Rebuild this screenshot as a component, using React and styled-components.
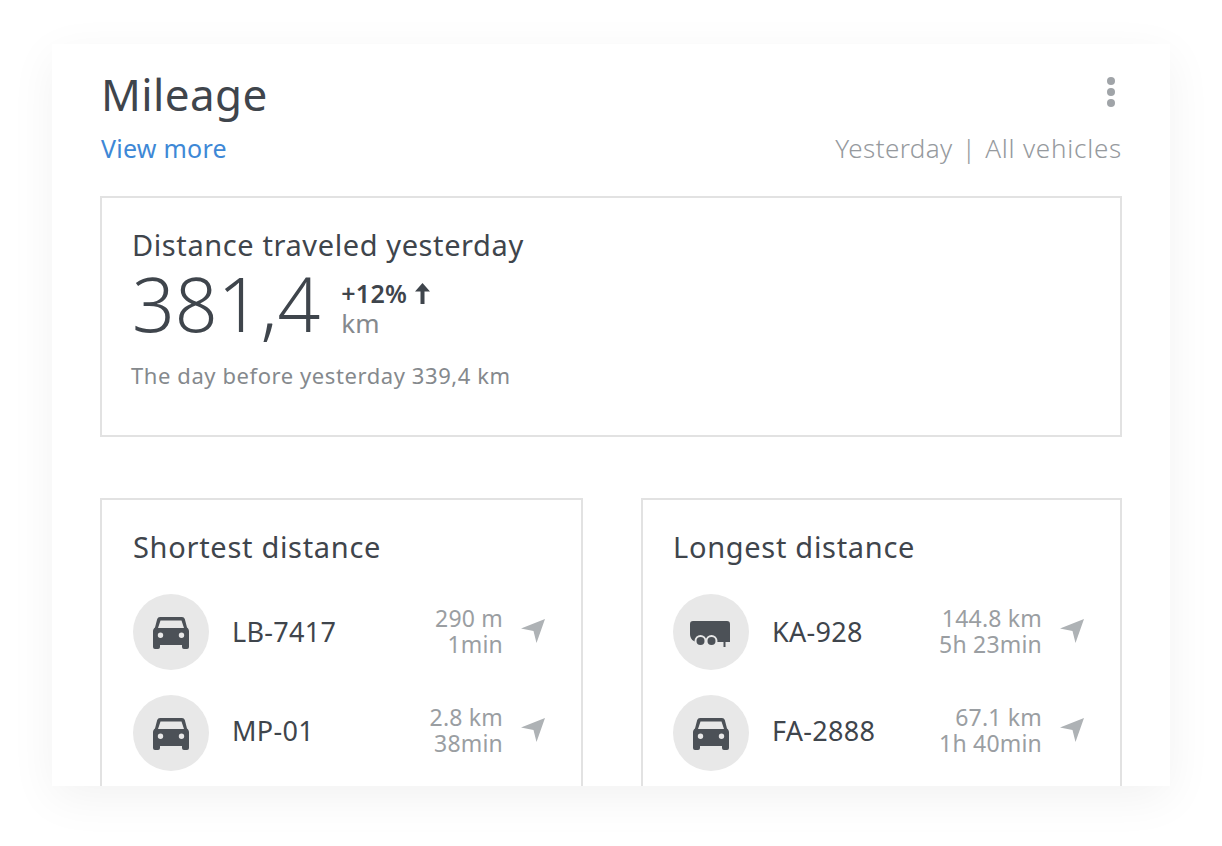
import styled, { createGlobalStyle } from 'styled-components'

const GlobalStyle = createGlobalStyle`
  html, body {
    margin: 0;
    background: #fff;
  }
  body {
    font-family: "Noto Sans", "Open Sans", sans-serif;
    color: #3f454c;
  }
  * {
    box-sizing: border-box;
  }
`

const Page = styled.div`
  width: 1222px;
  height: 846px;
  padding: 44px 52px 0;
  overflow: hidden;
`

const Card = styled.div`
  width: 1118px;
  height: 742px;
  padding: 22px 48px 0 48px;
  background: #fff;
  overflow: hidden;
  box-shadow: 0 12px 44px rgba(0, 0, 0, 0.055);
`

const Header = styled.div`
  display: flex;
  justify-content: space-between;
  align-items: flex-start;
`

const Title = styled.h1`
  margin: 0 0 0 1px;
  font-size: 44px;
  line-height: 56px;
  font-weight: 400;
  letter-spacing: 0.4px;
`

const Dots = styled.div`
  display: flex;
  flex-direction: column;
  gap: 3px;
  margin: 11px 7px 0 0;

  span {
    width: 8px;
    height: 8px;
    border-radius: 50%;
    background: #a0a4a8;
  }
`

const SubHeader = styled.div`
  display: flex;
  justify-content: space-between;
  align-items: center;
  margin-top: 10px;
  height: 32px;
`

const MoreLink = styled.a`
  margin-left: 1px;
  font-size: 25px;
  letter-spacing: 0.25px;
  color: #3e88d6;
`

const Filters = styled.div`
  display: flex;
  gap: 9px;
  font-size: 26px;
  font-weight: 300;
  letter-spacing: 0.4px;
  color: #969a9e;
`

const Vehicles = styled.span`
  letter-spacing: 0.75px;
`

const Summary = styled.div`
  margin-top: 32px;
  height: 241px;
  padding: 29px 30px 0;
  border: 2px solid #e2e2e2;
`

const SummaryTitle = styled.div`
  font-size: 29px;
  line-height: 36px;
  letter-spacing: 0.6px;
`

const ValueRow = styled.div`
  display: flex;
  align-items: center;
  gap: 21px;
  height: 80px;
`

const BigValue = styled.div`
  font-size: 75px;
  line-height: 78px;
  font-weight: 300;
`

const Delta = styled.div`
  display: flex;
  flex-direction: column;
  margin-top: 10px;
`

const Change = styled.div`
  display: flex;
  align-items: center;
  gap: 8px;
  font-size: 25px;
  line-height: 30px;
  font-weight: 600;
  letter-spacing: 0.3px;
`

const Unit = styled.div`
  font-size: 26px;
  line-height: 30px;
  color: #85898d;
`

const Previous = styled.div`
  margin: 17px 0 0 -1px;
  font-size: 22px;
  line-height: 30px;
  letter-spacing: 0.58px;
  color: #85898d;
`

const Panels = styled.div`
  display: grid;
  grid-template-columns: 483px 481px;
  gap: 58px;
  margin-top: 61px;
`

const Panel = styled.div`
  height: 400px;
  padding: 28px 36px 0 ${(props) => props.$inset}px;
  border: 2px solid #e2e2e2;
`

const PanelTitle = styled.h2`
  margin: 0 0 28px;
  font-size: 29px;
  line-height: 38px;
  font-weight: 400;
  letter-spacing: 0.7px;
`

const Rows = styled.div`
  display: flex;
  flex-direction: column;
  gap: 25px;
`

const Row = styled.div`
  display: flex;
  align-items: center;
`

const Avatar = styled.div`
  display: flex;
  align-items: center;
  justify-content: center;
  flex: none;
  width: 76px;
  height: 76px;
  border-radius: 50%;
  background: #e8e8e8;
  color: #4c5157;
`

const Details = styled.div`
  display: flex;
  align-items: center;
  flex: 1;
  margin: 0 0 ${(props) => props.$lift}px 23px;
`

const Plate = styled.div`
  flex: 1;
  font-size: 27px;
  letter-spacing: 0.3px;
`

const Stats = styled.div`
  font-size: 23px;
  line-height: 26px;
  letter-spacing: 0.2px;
  text-align: right;
  color: #9a9ea2;
`

const Direction = styled.svg`
  flex: none;
  width: 24px;
  height: 24px;
  margin-left: 18px;
  fill: #aeb2b5;
`

const CarIcon = () => (
  <svg width="36" height="33" viewBox="0 0 36 33" fill="currentColor">
    <path
      fillRule="evenodd"
      d="M7 1H29a3 3 0 0 1 2.800 2L34 11.500c1.300 1 2 2.400 2 4V31a2 2 0 0 1-2 2H31a2 2 0 0 1-2-2V29H7v2a2 2 0 0 1-2 2H2a2 2 0 0 1-2-2V15.500c0-1.600.7-3 2-4L4.200 3A3 3 0 0 1 7 1ZM7.500 4.500L5 12H31L28.500 4.500ZM7.500 16.500a2.700 2.700 0 1 0 0 5.400 2.700 2.700 0 0 0 0-5.400ZM28.500 16.500a2.700 2.700 0 1 0 0 5.400 2.700 2.700 0 0 0 0-5.400Z"
    />
  </svg>
)

const TrailerIcon = () => (
  <svg width="42" height="29" viewBox="0 0 42 29" fill="currentColor">
    <path d="M3 3H37a3 3 0 0 1 3 3V24H35.500V29H33.500V24H8C3.500 24 0 21 0 16V6A3 3 0 0 1 3 3Z" />
    <circle cx="10.500" cy="23" r="6" fill="#e8e8e8" />
    <circle cx="10.500" cy="23" r="4" />
    <circle cx="21.500" cy="23" r="6" fill="#e8e8e8" />
    <circle cx="21.500" cy="23" r="4" />
  </svg>
)

const UpArrow = () => (
  <svg width="15" height="21" viewBox="0 0 15 21" fill="currentColor">
    <path d="M7.500 0L15 8.500H9.500V21H5.500V8.500H0Z" />
  </svg>
)

const longest = [
  { plate: 'KA-928', icon: TrailerIcon, distance: '144.8 km', time: '5h 23min' },
  { plate: 'FA-2888', icon: CarIcon, distance: '67.1 km', time: '1h 40min' },
]

const shortest = [
  { plate: 'LB-7417', icon: CarIcon, distance: '290 m', time: '1min' },
  { plate: 'MP-01', icon: CarIcon, distance: '2.8 km', time: '38min' },
]

const VehiclePanel = ({ title, vehicles, inset }) => (
  <Panel $inset={inset}>
    <PanelTitle>{title}</PanelTitle>
    <Rows>
      {vehicles.map(({ plate, icon: Icon, distance, time }, i) => (
        <Row key={plate}>
          <Avatar>
            <Icon />
          </Avatar>
          <Details $lift={i === 0 ? 2 : 6}>
            <Plate>{plate}</Plate>
            <Stats>
              <div>{distance}</div>
              <div>{time}</div>
            </Stats>
            <Direction viewBox="0 0 24 24">
              <path d="M24 0L0 9.500 12.500 12 15.500 24Z" />
            </Direction>
          </Details>
        </Row>
      ))}
    </Rows>
  </Panel>
)

export default function App() {
  return (
    <Page>
      <GlobalStyle />
      <Card>
        <Header>
          <Title>Mileage</Title>
          <Dots>
            <span />
            <span />
            <span />
          </Dots>
        </Header>
        <SubHeader>
          <MoreLink>View more</MoreLink>
          <Filters>
            <span>Yesterday</span>
            <span>|</span>
            <Vehicles>All vehicles</Vehicles>
          </Filters>
        </SubHeader>
        <Summary>
          <SummaryTitle>Distance traveled yesterday</SummaryTitle>
          <ValueRow>
            <BigValue>381,4</BigValue>
            <Delta>
              <Change>
                +12% <UpArrow />
              </Change>
              <Unit>km</Unit>
            </Delta>
          </ValueRow>
          <Previous>The day before yesterday 339,4 km</Previous>
        </Summary>
        <Panels>
          <VehiclePanel title="Shortest distance" vehicles={shortest} inset={31} />
          <VehiclePanel title="Longest distance" vehicles={longest} inset={30} />
        </Panels>
      </Card>
    </Page>
  )
}
